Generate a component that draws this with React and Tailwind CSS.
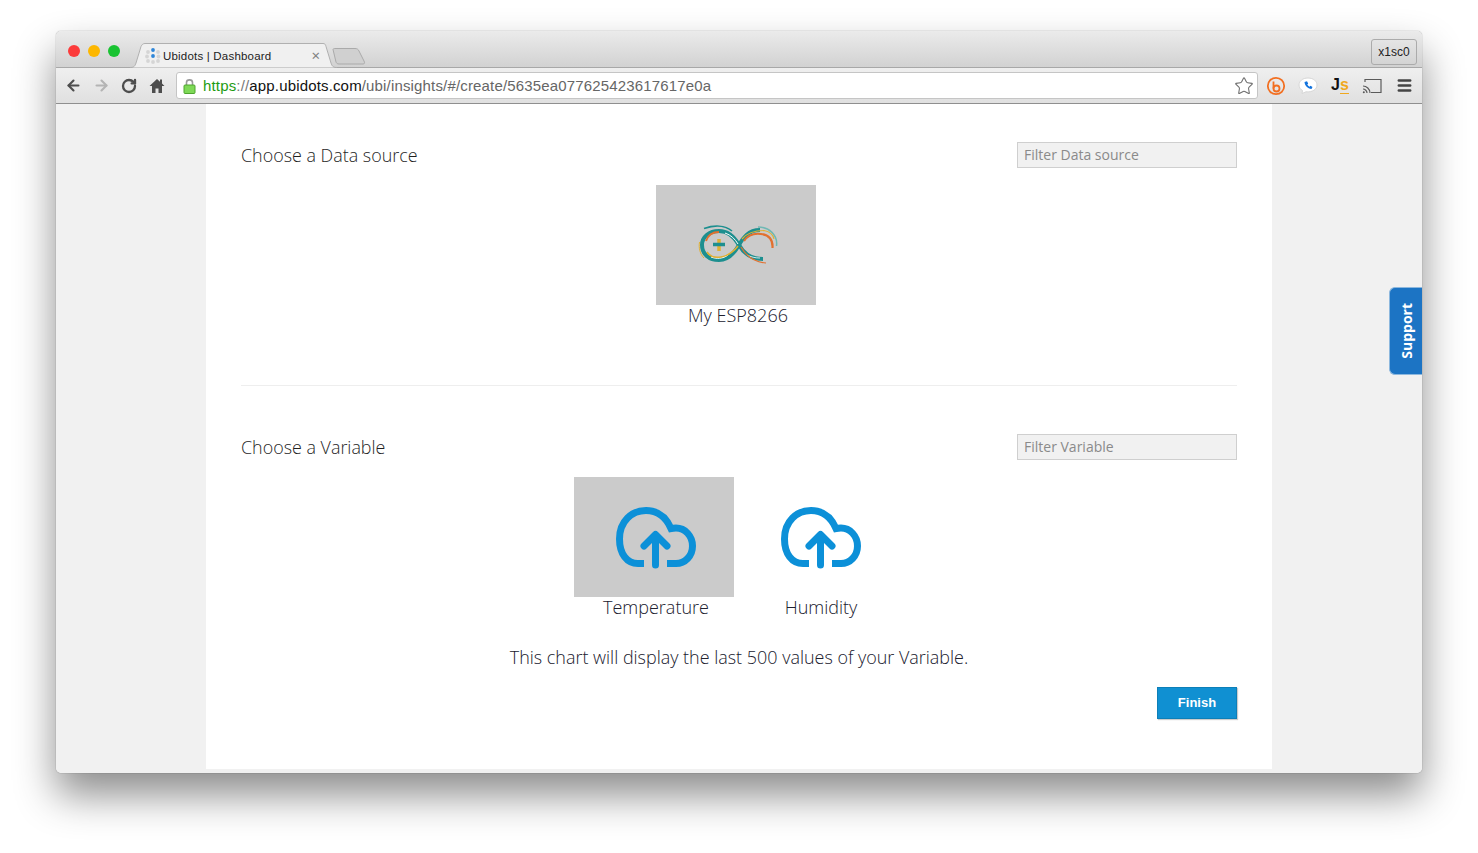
import { ArrowLeft, ArrowRight, RotateCw, Star, Menu } from 'lucide-react'

const sans = "font-['Open_Sans',sans-serif]"

function CloudUpload() {
  return (
    <svg className="mt-[2px]" width="80" height="62" viewBox="0 0 80 62" fill="none" stroke="#0c90d8" strokeWidth="7">
      <path d="M28 56.500H22C11 56.500 3.500 47 3.500 32C3.500 14 16 3.500 30 3.500C42 3.500 50 10 55 21.500C57 21 59 21 60 21C69 21 76.500 29 76.500 39C76.500 49 69 56.500 60 56.500H51" />
      <path d="M39.500 58V28M28 39L39.500 27.500L51 39" strokeLinecap="round" strokeLinejoin="round" />
    </svg>
  )
}

function ArduinoLogo() {
  return (
    <svg width="80" height="42" viewBox="0 0 80 42" fill="none">
      {/* teal body of the infinity */}
      <path d="M21 7C11 7 4 13 4 21C4 30 11 36 21 36C31 36 37 28 41 21C45 14 50 6 62 6" stroke="#1d8f8f" strokeWidth="4" />
      <path d="M21 7C31 7 37 14 41 21C45 28 51 35 65 35" stroke="#1d8f8f" strokeWidth="4" />
      {/* white streaks over it */}
      <path d="M13 33C18 35 25 35 30 31" stroke="#fff" strokeWidth="1" />
      <path d="M27 9C33 11 37 15 40 20" stroke="#fff" strokeWidth="1" />
      <path d="M49 31C53 33 57 34 62 34" stroke="#fff" strokeWidth="0.800" />
      {/* coloured strands */}
      <path d="M8 17C10 11 15 8 21 8" stroke="#e2712f" strokeWidth="2" />
      <path d="M9 28C12 33 17 34 23 33C30 32 36 27 40 22" stroke="#e0b032" strokeWidth="1.500" />
      <path d="M1.500 18C0.500 24 2 30 6 34" stroke="#e0b032" strokeWidth="1" />
      <path d="M6 4.500C16 1 27 1 34 7" stroke="#1d8f8f" strokeWidth="1.500" />
      <path d="M43 23C47 30 54 38 68 39" stroke="#e2712f" strokeWidth="1.200" />
      <path d="M46 17C50 11 56 9 63 10C71 11 75 16 74.500 24" stroke="#e2712f" strokeWidth="2.200" />
      <path d="M60 3C71 3 80 11 78.500 22" stroke="#6fb8b4" strokeWidth="1.500" />
      <path d="M44 15C49 9 56 6.500 66 6.500C71 7.500 75 10 76 15" stroke="#e0b032" strokeWidth="1.200" />
      <path d="M21 15V27" stroke="#e0b032" strokeWidth="3.500" />
      <path d="M15 20.500H27" stroke="#1d8f8f" strokeWidth="3.500" />
    </svg>
  )
}

function Card({ selected, label, children, nudge }) {
  return (
    <div className="flex flex-col w-[160px]">
      <div className={`w-[160px] h-[120px] flex items-center justify-center ${nudge ? 'pl-[4px]' : ''} ${selected ? 'bg-[#cbcbcb]' : ''}`}>{children}</div>
      <div className={`${sans} ${nudge ? 'pl-[4px]' : ''} text-center text-[18px] leading-[20px] font-light text-[#20202e]`}>{label}</div>
    </div>
  )
}

function SectionHead({ title, filter }) {
  return (
    <div className="flex items-center justify-between h-[26px]">
      <h2 className={`${sans} text-[17.900px] font-light text-[#1f1f1f]`}>{title}</h2>
      <div className={`${sans} w-[220px] h-[26px] border border-[#cfcfcf] bg-[#f1f1f1] px-[6px] text-[14px] leading-[24px] text-[#8a8a8a]`}>{filter}</div>
    </div>
  )
}

function HomeIcon() {
  return (
    <svg width="16" height="16" viewBox="0 0 16 16" fill="#4d4d4d">
      <path d="M8 1L0.500 8H3V15H6.500V10.500H9.500V15H13V8H15.500L13 5.600V1.500H11V3.800Z" />
    </svg>
  )
}

function LockIcon() {
  return (
    <svg width="13" height="16" viewBox="0 0 13 16">
      <path d="M3.500 8V4.500C3.500 1 9.500 1 9.500 4.500V8" fill="none" stroke="#9a9a9a" strokeWidth="1.600" />
      <rect x="1" y="7" width="11" height="8.500" rx="1" fill="#7ed957" stroke="#4ea52f" />
    </svg>
  )
}

function TabFavicon() {
  const dots = [
    [3, 4, '#d5d5d5'], [8, 2, '#2f86d8'], [13, 4, '#d5d5d5'],
    [2, 8.500, '#d5d5d5'], [8, 8, '#2f86d8'], [13.500, 8.500, '#d5d5d5'],
    [3, 13, '#d5d5d5'], [8, 14, '#d5d5d5'], [13, 13, '#d5d5d5'],
  ]
  return (
    <svg width="16" height="16" viewBox="0 0 16 16">
      {dots.map(([cx, cy, fill], i) => <circle key={i} cx={cx} cy={cy} r="1.900" fill={fill} />)}
    </svg>
  )
}

function BitlyIcon() {
  return (
    <svg width="20" height="20" viewBox="0 0 20 20" fill="none" stroke="#f26f21" strokeWidth="1.800">
      <circle cx="10" cy="10" r="8.200" />
      <circle cx="10.500" cy="12.500" r="3" />
      <path d="M7.500 5.500V12.500" />
    </svg>
  )
}

function PhoneBubble() {
  return (
    <svg width="20" height="18" viewBox="0 0 20 18">
      <path d="M10 1C4.500 1 1 4.200 1 8C1 10.500 2.500 12.500 4.500 13.500L4 16.500L8 14.800C14 15.500 19 12.500 19 8C19 4.200 15.500 1 10 1Z" fill="#fff" stroke="#d6d6d6" />
      <path d="M6.500 5C7 9 9.500 11.500 13.500 12L14.500 10L12.500 8.800L11.500 9.700C10.500 9.200 9.800 8.500 9.300 7.500L10.200 6.500L9 4.300Z" fill="#1273de" />
    </svg>
  )
}

function CastIcon() {
  return (
    <svg width="20" height="16" viewBox="0 0 20 16" fill="none" stroke="#5a5a5a" strokeWidth="1.200">
      <path d="M3 4V1.500H19V14.500H9" />
      <path d="M1 8C4.500 8 8 11 8 15M1 11C3 11 5 13 5 15" />
      <circle cx="1.800" cy="14.200" r="1" fill="#5a5a5a" stroke="none" />
    </svg>
  )
}

export default function App() {
  return (
    <div className="w-full h-[853px] overflow-hidden bg-white pt-[31px] px-[56px]">
      <div className="relative h-[742px] flex flex-col rounded-[5px] overflow-hidden shadow-[0_0_1px_rgba(0,0,0,0.6),0_22px_40px_rgba(0,0,0,0.45)]">
        {/* tab strip */}
        <div className="h-[37px] flex items-end bg-gradient-to-b from-[#ebebeb] to-[#d2d2d2] border-b border-[#a8a8a8] shrink-0">
          <div className="flex items-center gap-[8px] pl-[12px] h-[37px] pt-[4px]">
            <span className="w-[12px] h-[12px] rounded-full bg-[#fc3b3b]" />
            <span className="w-[12px] h-[12px] rounded-full bg-[#fdb700]" />
            <span className="w-[12px] h-[12px] rounded-full bg-[#19c332]" />
          </div>
          <div className="relative ml-[10px] w-[207px] h-[25px] mb-[-1px] flex items-center pl-[15px] pr-[17px]">
            <svg className="absolute inset-0" width="207" height="25" viewBox="0 0 207 25">
              <path d="M0 24.500C4 24.500 5 23 6 20L11 3.500C12 1.500 13 0.500 15 0.500H193C195 0.500 195.500 1.500 196 3.500L201 20C202 23 203 24.500 207 24.500" fill="#f0f0f0" stroke="#b0b0b0" />
            </svg>
            <span className="relative"><TabFavicon /></span>
            <span className="relative ml-[2px] pt-[2px] font-['Liberation_Sans',sans-serif] text-[11.500px] tracking-[0.2px] text-[#222]">Ubidots | Dashboard</span>
            <span className="relative ml-auto text-[15px] leading-none text-[#808080]">×</span>
          </div>
          <svg className="ml-[-5px] mb-[2px]" width="34" height="17" viewBox="0 0 34 17">
            <path d="M1 1.500C1 0.800 2 0.500 3 0.500H23C25 0.500 26 1 27 3L32 13C33 15 32.500 16 31 16H7C5 16 4.500 15 4 14Z" fill="#d0d0d0" stroke="#aaa" />
          </svg>
          <div className="ml-auto mr-[5px] mb-[2px] w-[46px] h-[26px] border border-[#ababab] rounded-[3px] font-['Liberation_Sans',sans-serif] text-[12px] leading-[24px] text-center text-[#222]">x1sc0</div>
        </div>

        {/* toolbar */}
        <div className="h-[36px] flex items-center bg-gradient-to-b from-[#efefef] to-[#e0e0e0] border-b border-[#8f8f8f] shrink-0 pl-[9px]">
          <ArrowLeft size={17} strokeWidth={3} className="text-[#4d4d4d]" />
          <ArrowRight size={17} strokeWidth={3} className="ml-[11px] text-[#b4b4b4]" />
          <RotateCw size={16} strokeWidth={3.500} className="ml-[11px] text-[#4d4d4d]" />
          <span className="ml-[12px]"><HomeIcon /></span>
          <div className="ml-[11px] w-[1082px] h-[27px] flex items-center bg-white border border-[#c5c5c5] rounded-[3px] pl-[6px] pr-[3px]">
            <LockIcon />
            <span className="ml-[7px] pt-[1px] font-['Liberation_Sans',sans-serif] text-[15px] tracking-[0.16px] whitespace-nowrap">
              <span className="text-[#1e9c12]">https</span>
              <span className="text-[#777]">://</span>
              <span className="text-[#111]">app.ubidots.com</span>
              <span className="text-[#666]">/ubi/insights/#/create/5635ea077625423617617e0a</span>
            </span>
            <Star size={20} strokeWidth={1.300} className="ml-auto text-[#6f6f6f]" />
          </div>
          <span className="ml-[8px]"><BitlyIcon /></span>
          <span className="ml-[12px]"><PhoneBubble /></span>
          <span className="ml-[13px] flex items-baseline font-['Liberation_Sans',sans-serif] font-bold text-[16px] leading-none">
            <span className="text-[#111]">J</span><span className="text-[#f0a81e] border-b border-[#f0a81e]">s</span>
          </span>
          <span className="ml-[13px]"><CastIcon /></span>
          <Menu size={17} strokeWidth={3.500} className="ml-[14px] text-[#444]" />
        </div>

        {/* page */}
        <div className="flex-1 bg-[#f1f1f1] pl-[150px] pb-[4px]">
          <div className="w-[1066px] h-full bg-white px-[35px] pt-[38px]">
            <SectionHead title="Choose a Data source" filter="Filter Data source" />
            <div className="flex justify-center pr-[6px] mt-[17px]">
              <Card selected nudge label="My ESP8266"><ArduinoLogo /></Card>
            </div>
            <div className="border-t border-[#eeeeee] mt-[60px]" />
            <div className="mt-[48px]">
              <SectionHead title="Choose a Variable" filter="Filter Variable" />
            </div>
            <div className="flex justify-center gap-[7px] pr-[3px] mt-[17px]">
              <Card selected nudge label="Temperature"><CloudUpload /></Card>
              <Card label="Humidity"><CloudUpload /></Card>
            </div>
            <p className={`${sans} text-center text-[17.950px] font-light text-[#20202e] mt-[28px] leading-[24px]`}>
              This chart will display the last 500 values of your Variable.
            </p>
            <div className="flex justify-end mt-[18px]">
              <button className="w-[80px] h-[32px] bg-[#1090d2] border border-[#0d7fb8] shadow-[1px_1px_1px_rgba(0,0,0,0.2)] font-['Liberation_Sans',sans-serif] font-bold text-[13px] text-white">Finish</button>
            </div>
          </div>
        </div>

        {/* support tab */}
        <div className="absolute right-0 top-[256px] w-[33px] h-[88px] bg-[#1c74c4] border-l border-t border-b border-[#8db8de] rounded-l-[6px] flex items-center justify-center">
          <span className={`${sans} [writing-mode:vertical-rl] rotate-180 font-bold text-[14px] text-white`}>Support</span>
        </div>
      </div>
    </div>
  )
}
